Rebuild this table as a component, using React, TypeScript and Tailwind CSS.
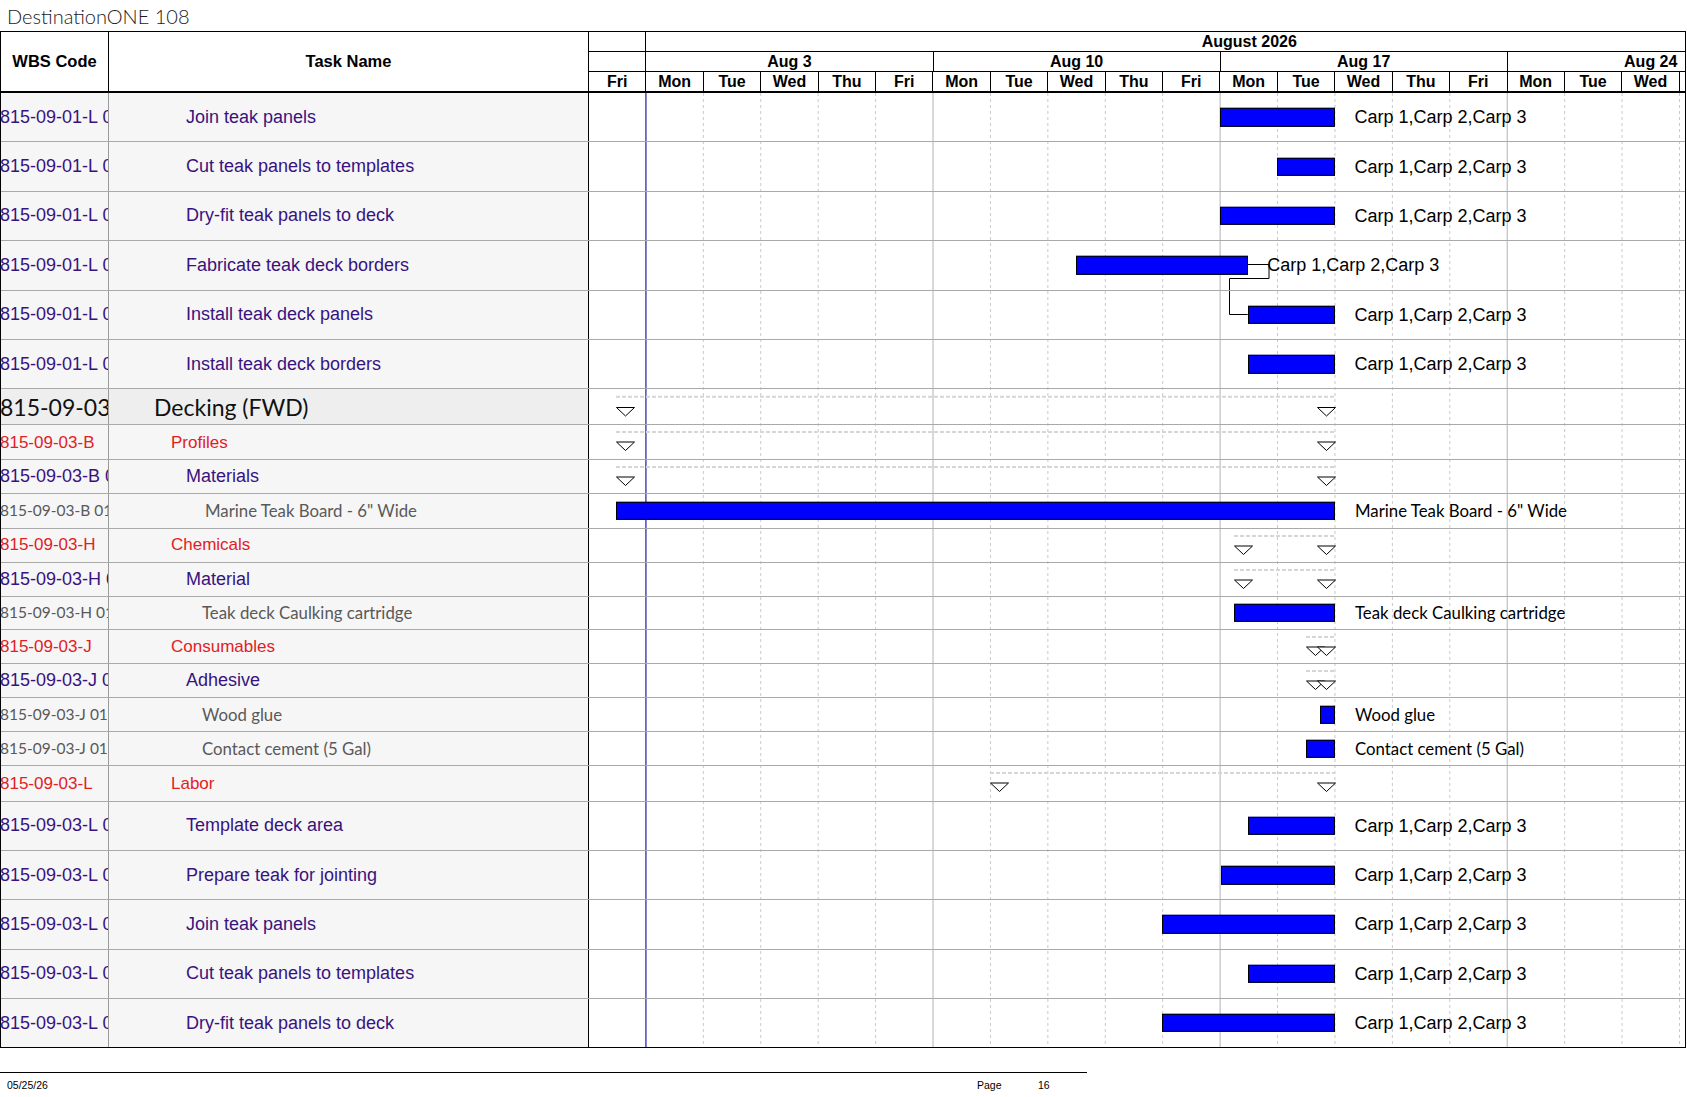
import React from "react";

const ARIAL = "font-['Liberation_Sans',Arial,sans-serif]";
const CAL = "font-['Lato','Open_Sans',sans-serif]";

const DAY = 57.42;
const X0 = 589; // page x where the timeline starts
const px = (pageX: number) => pageX - X0;
const CARP = "Carp 1,Carp 2,Carp 3";

type Kind = "task" | "group" | "top" | "res";

type Row = {
  wbs: string;
  name: string;
  kind: Kind;
  h: string;
  bar?: [number, number];
  label?: string;
  sum?: [number, number];
  pad?: string;
};

const rows: Row[] = [
  { wbs: "815-09-01-L 01", name: "Join teak panels", kind: "task", h: "h-[49.4px]", bar: [1220, 1335], label: CARP },
  { wbs: "815-09-01-L 02", name: "Cut teak panels to templates", kind: "task", h: "h-[49.4px]", bar: [1277.4, 1335], label: CARP },
  { wbs: "815-09-01-L 03", name: "Dry-fit teak panels to deck", kind: "task", h: "h-[49.4px]", bar: [1220, 1335], label: CARP },
  { wbs: "815-09-01-L 04", name: "Fabricate teak deck borders", kind: "task", h: "h-[49.4px]", bar: [1076, 1247.7], label: CARP },
  { wbs: "815-09-01-L 05", name: "Install teak deck panels", kind: "task", h: "h-[49.4px]", bar: [1247.7, 1335], label: CARP },
  { wbs: "815-09-01-L 06", name: "Install teak deck borders", kind: "task", h: "h-[49.4px]", bar: [1247.7, 1335], label: CARP },
  { wbs: "815-09-03", name: "Decking (FWD)", kind: "top", h: "h-[36px]", sum: [616, 1335] },
  { wbs: "815-09-03-B", name: "Profiles", kind: "group", h: "h-[35px]", sum: [616, 1335] },
  { wbs: "815-09-03-B 01", name: "Materials", kind: "task", h: "h-[34px]", sum: [616, 1335] },
  { wbs: "815-09-03-B 01.01", name: 'Marine Teak Board - 6" Wide', kind: "res", h: "h-[34.4px]", bar: [616, 1335], label: 'Marine Teak Board - 6" Wide', pad: "pl-[96px]" },
  { wbs: "815-09-03-H", name: "Chemicals", kind: "group", h: "h-[34px]", sum: [1234, 1335] },
  { wbs: "815-09-03-H 01", name: "Material", kind: "task", h: "h-[34px]", sum: [1234, 1335] },
  { wbs: "815-09-03-H 01.01", name: "Teak deck Caulking cartridge", kind: "res", h: "h-[33.6px]", bar: [1234, 1335], label: "Teak deck Caulking cartridge" },
  { wbs: "815-09-03-J", name: "Consumables", kind: "group", h: "h-[34px]", sum: [1306, 1335] },
  { wbs: "815-09-03-J 01", name: "Adhesive", kind: "task", h: "h-[34px]", sum: [1306, 1335] },
  { wbs: "815-09-03-J 01", name: "Wood glue", kind: "res", h: "h-[34px]", bar: [1320, 1335], label: "Wood glue" },
  { wbs: "815-09-03-J 01", name: "Contact cement (5 Gal)", kind: "res", h: "h-[34px]", bar: [1306, 1335], label: "Contact cement (5 Gal)" },
  { wbs: "815-09-03-L", name: "Labor", kind: "group", h: "h-[35.4px]", sum: [990, 1335] },
  { wbs: "815-09-03-L 01", name: "Template deck area", kind: "task", h: "h-[49.3px]", bar: [1248.3, 1335], label: CARP },
  { wbs: "815-09-03-L 02", name: "Prepare teak for jointing", kind: "task", h: "h-[49.3px]", bar: [1220.7, 1335], label: CARP },
  { wbs: "815-09-03-L 03", name: "Join teak panels", kind: "task", h: "h-[49.3px]", bar: [1162.3, 1335], label: CARP },
  { wbs: "815-09-03-L 04", name: "Cut teak panels to templates", kind: "task", h: "h-[49.3px]", bar: [1248.3, 1335], label: CARP },
  { wbs: "815-09-03-L 05", name: "Dry-fit teak panels to deck", kind: "task", h: "h-[48.3px]", bar: [1162.3, 1335], label: CARP },
];

const wbsStyle: Record<Kind, string> = {
  task: `${ARIAL} text-[18px] text-[#38137f]`,
  group: `${ARIAL} text-[17px] text-[#e2211f]`,
  top: `${CAL} text-[23px] text-[#111]`,
  res: `${CAL} text-[15.5px] text-[#595959]`,
};

const nameStyle: Record<Kind, string> = {
  task: `${ARIAL} text-[18px] text-[#38137f] pl-[77px]`,
  group: `${ARIAL} text-[17px] text-[#e2211f] pl-[62px]`,
  top: `${CAL} text-[23px] text-[#111] pl-[45px]`,
  res: `${CAL} text-[16.8px] text-[#595959] pl-[93px]`,
};

const days = ["Fri", "Mon", "Tue", "Wed", "Thu", "Fri", "Mon", "Tue", "Wed", "Thu", "Fri", "Mon", "Tue", "Wed", "Thu", "Fri", "Mon", "Tue", "Wed", "Thu"];
const weeks = ["Aug 3", "Aug 10", "Aug 17", "Aug 24"];

function Triangle({ x, y }: { x: number; y: number }) {
  return (
    <polygon
      points={`${x + 0.5},${y + 0.5} ${x + 18.5},${y + 0.5} ${x + 9.5},${y + 9}`}
      fill="white"
      stroke="black"
      strokeWidth={1}
    />
  );
}

function TimelineCell({ r, last }: { r: Row; last: boolean }) {
  const isTop = r.kind === "top";
  return (
    <div className={`relative ${r.h} ${last ? "" : "border-b border-[#a9a9a9]"}`}>
      {r.sum && (
        <svg className="absolute inset-0 h-full w-full overflow-visible">
          <line
            x1={px(r.sum[0])}
            x2={px(r.sum[1])}
            y1={isTop ? 7.7 : 7}
            y2={isTop ? 7.7 : 7}
            stroke="#d6d6d6"
            strokeWidth={2}
            strokeDasharray="4 2"
          />
          <Triangle x={px(r.sum[0])} y={isTop ? 18 : 16.5} />
          <Triangle x={px(r.sum[1]) - 18} y={isTop ? 18 : 16.5} />
        </svg>
      )}
      {r.bar && (
        <div
          className="absolute top-1/2 h-[18.4px] -translate-y-1/2 border border-black bg-[#0000ff]"
          style={{ left: px(r.bar[0]), width: r.bar[1] - r.bar[0] }}
        />
      )}
      {r.label && (
        <span
          className={`absolute top-1/2 -translate-y-1/2 whitespace-nowrap leading-none text-black ${
            r.kind === "res" ? `${CAL} text-[16.8px]` : `${ARIAL} text-[18px]`
          }`}
          style={{ left: px(r.bar![1]) + (r.kind === "res" ? 20 : 19.5) }}
        >
          {r.label}
        </span>
      )}
    </div>
  );
}

export default function App() {
  return (
    <div className="h-[1097px] w-[1687px] overflow-hidden bg-white">
      {/* Title */}
      <div className={`flex h-[31px] items-center pl-[7px] ${CAL} text-[20px] font-light text-[#1a1a1a]`}>
        DestinationONE 108
      </div>

      {/* Gantt table */}
      <div className="w-[1686px] border border-black">
        {/* Header */}
        <div className="flex">
          <div className={`flex h-[61px] w-[108px] shrink-0 items-center justify-center border-b-2 border-r border-black ${ARIAL} text-[16.5px] font-bold`}>
            WBS Code
          </div>
          <div className={`flex h-[61px] w-[480px] shrink-0 items-center justify-center border-b-2 border-r border-black ${ARIAL} text-[16.5px] font-bold`}>
            Task Name
          </div>
          <div className={`min-w-0 flex-1 overflow-hidden ${ARIAL} text-[16px] font-bold leading-none text-black`}>
            <div className="flex h-[20px] border-b border-black">
              <div className="w-[57.42px] shrink-0 border-r border-black" />
              <div className="flex w-[1205.8px] shrink-0 items-center justify-center">August 2026</div>
            </div>
            <div className="flex h-[20px] border-b border-black">
              <div className="w-[57.42px] shrink-0 border-r border-black" />
              {weeks.map((w) => (
                <div key={w} className="flex w-[287.1px] shrink-0 items-center justify-center border-r border-black">
                  {w}
                </div>
              ))}
            </div>
            <div className="flex h-[21px] border-b-2 border-black">
              {days.map((d, i) => (
                <div key={i} className="flex w-[57.42px] shrink-0 items-center justify-center border-r border-black">
                  {d}
                </div>
              ))}
            </div>
          </div>
        </div>

        {/* Body */}
        <div className="flex">
          <div className="w-[588px] shrink-0">
            {rows.map((r, i) => {
              const last = i === rows.length - 1;
              const bg = r.kind === "top" ? "bg-[#eeeeee]" : "bg-[#f6f6f6]";
              return (
                <div key={i} className={`flex ${r.h} ${bg} ${last ? "" : "border-b border-[#a9a9a9]"}`}>
                  <div className={`-ml-px flex w-[109px] shrink-0 items-center overflow-hidden whitespace-nowrap border-r border-[#9a9a9a] ${wbsStyle[r.kind]}`}>
                    {r.wbs}
                  </div>
                  <div className={`flex w-[480px] shrink-0 items-center overflow-hidden whitespace-nowrap border-r border-black ${nameStyle[r.kind]} ${r.pad ?? ""}`}>
                    {r.name}
                  </div>
                </div>
              );
            })}
          </div>

          <div className="relative min-w-0 flex-1">
            {/* grid lines, status date line and the link connector */}
            <svg className="absolute inset-0 h-full w-full">
              {Array.from({ length: 19 }, (_, i) => i + 1).map((k) => {
                const x = DAY * k - 0.5;
                if (k === 1) return <line key={k} x1={x} x2={x} y1={0} y2="100%" stroke="#1c1ca8" strokeWidth={1.2} />;
                if (k === 6 || k === 11 || k === 16)
                  return <line key={k} x1={x} x2={x} y1={0} y2="100%" stroke="#b3b3b3" strokeWidth={1} />;
                return <line key={k} x1={x} x2={x} y1={0} y2="100%" stroke="#c9c9c9" strokeWidth={1} strokeDasharray="3 3" />;
              })}
              <path
                d={`M${px(1247.7)} 171.5 H${px(1269)} V185.5 H${px(1229.5)} V221.5 H${px(1247.7)}`}
                fill="none"
                stroke="black"
                strokeWidth={1}
              />
            </svg>
            {rows.map((r, i) => (
              <TimelineCell key={i} r={r} last={i === rows.length - 1} />
            ))}
          </div>
        </div>
      </div>

      {/* Footer */}
      <div className={`mt-[24px] flex w-[1087px] border-t border-black pt-[7px] ${ARIAL} text-[10.5px] leading-none text-black`}>
        <span className="w-[977px] pl-[7px]">05/25/26</span>
        <span className="w-[61px]">Page</span>
        <span>16</span>
      </div>
    </div>
  );
}
